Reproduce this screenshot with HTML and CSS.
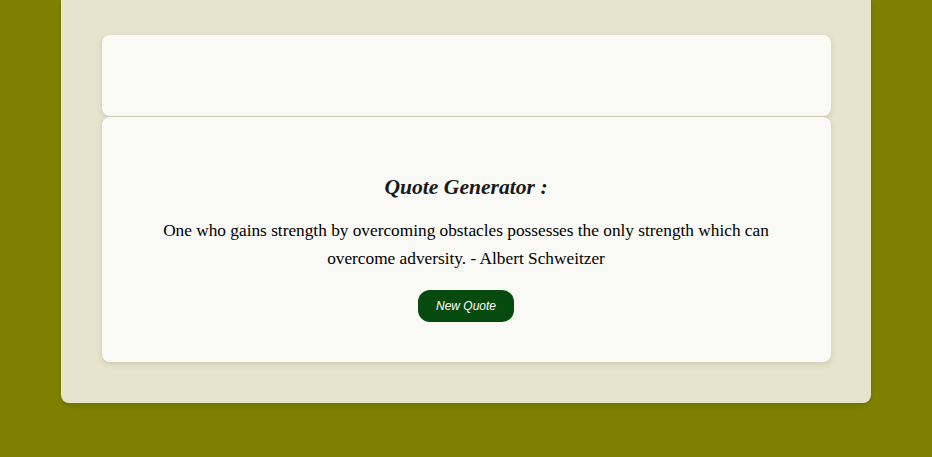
FILE: index.html
```html
<!DOCTYPE html>
<html>
<head>
<meta charset="utf-8">
<link rel="stylesheet" href="styles.css">
</head>
<body>
<div class="outer">
  <div class="card card-top"></div>
  <div class="card card-main">
    <h2 class="title">Quote Generator :</h2>
    <p class="quote">One who gains strength by overcoming obstacles possesses the only strength which can overcome adversity. - Albert Schweitzer</p>
    <button class="btn">New Quote</button>
  </div>
</div>
</body>
</html>
```
FILE: styles.css
```css
html, body {
  margin: 0;
  padding: 0;
}
body {
  background: #808000;
  font-family: "Liberation Serif", "Times New Roman", serif;
  height: 457px;
  overflow: hidden;
}
.outer {
  width: 810px;
  box-sizing: border-box;
  margin: 0 0 0 61px;
  padding: 35px 40px 41px 41px;
  background: #e5e5cd;
  border-radius: 0 0 8px 8px;
  box-shadow: 0 2px 6px rgba(0,0,0,0.15);
  display: flex;
  flex-direction: column;
  gap: 1px;
}
.card {
  background: #f9f9f5;
  border-radius: 8px;
  box-shadow: 0 2px 6px rgba(0,0,0,0.12);
}
.card-top {
  height: 81px;
}
.card-main {
  height: 245px;
  box-sizing: border-box;
  padding: 57px 56px 40px 55px;
  display: flex;
  flex-direction: column;
  align-items: center;
  text-align: center;
}
.title {
  margin: 0;
  font-size: 21.6px;
  line-height: 26px;
  font-style: italic;
  font-weight: bold;
  color: #1a1a1a;
}
.quote {
  margin: 17px 0 17px;
  font-size: 17.3px;
  line-height: 28px;
  color: #000;
}
.btn {
  width: 96px;
  height: 32px;
  border: none;
  border-radius: 12px;
  background: #064a0e;
  color: #fff;
  font-family: "Liberation Sans", Arial, sans-serif;
  font-style: italic;
  font-size: 12px;
  padding: 0;
}
```
